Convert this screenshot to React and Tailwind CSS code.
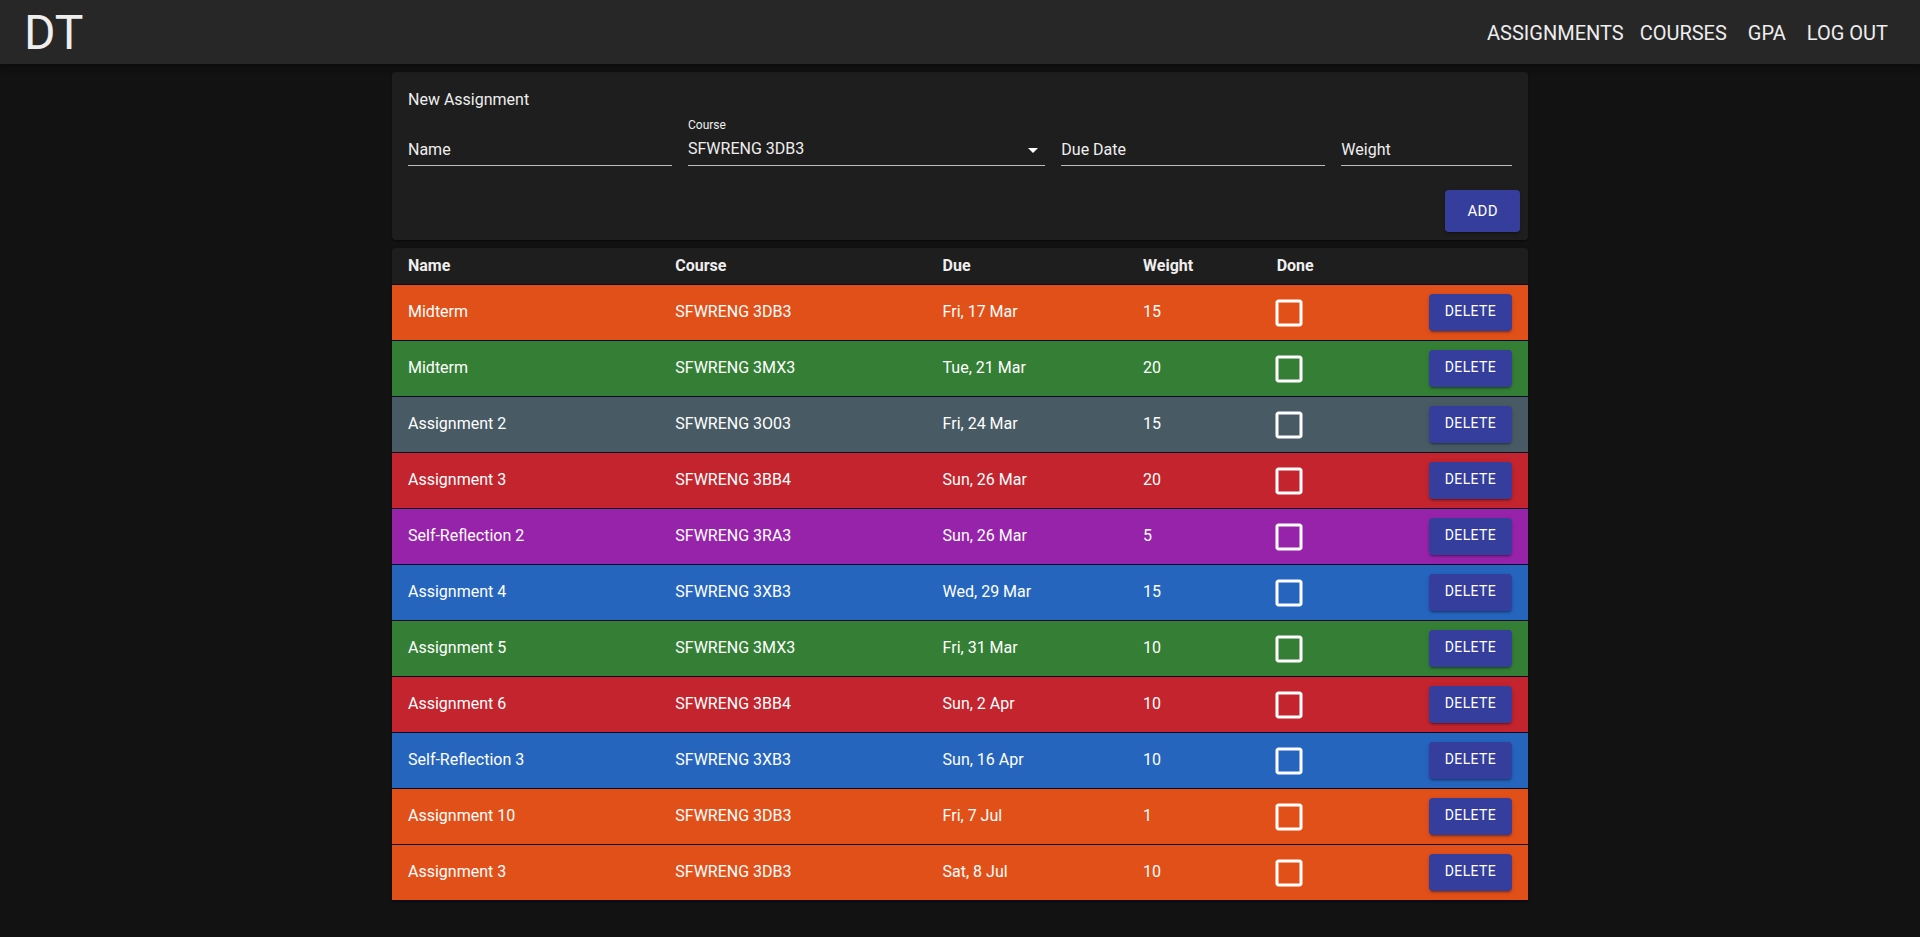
import { useState } from "react";

const COURSE_COLORS = {
  "SFWRENG 3DB3": "bg-[#e25019]",
  "SFWRENG 3MX3": "bg-[#347f35]",
  "SFWRENG 3O03": "bg-[#485b64]",
  "SFWRENG 3BB4": "bg-[#c3242d]",
  "SFWRENG 3RA3": "bg-[#9823ab]",
  "SFWRENG 3XB3": "bg-[#2565be]",
};

const ASSIGNMENTS = [
  ["Midterm", "SFWRENG 3DB3", "Fri, 17 Mar", 15],
  ["Midterm", "SFWRENG 3MX3", "Tue, 21 Mar", 20],
  ["Assignment 2", "SFWRENG 3O03", "Fri, 24 Mar", 15],
  ["Assignment 3", "SFWRENG 3BB4", "Sun, 26 Mar", 20],
  ["Self-Reflection 2", "SFWRENG 3RA3", "Sun, 26 Mar", 5],
  ["Assignment 4", "SFWRENG 3XB3", "Wed, 29 Mar", 15],
  ["Assignment 5", "SFWRENG 3MX3", "Fri, 31 Mar", 10],
  ["Assignment 6", "SFWRENG 3BB4", "Sun, 2 Apr", 10],
  ["Self-Reflection 3", "SFWRENG 3XB3", "Sun, 16 Apr", 10],
  ["Assignment 10", "SFWRENG 3DB3", "Fri, 7 Jul", 1],
  ["Assignment 3", "SFWRENG 3DB3", "Sat, 8 Jul", 10],
].map(([name, course, due, weight], id) => ({ id, name, course, due, weight, done: false }));

const BUTTON_SHADOW =
  "shadow-[0_3px_1px_-2px_rgba(0,0,0,0.2),0_2px_2px_rgba(0,0,0,0.14),0_1px_5px_rgba(0,0,0,0.12)]";
const CARD_SHADOW =
  "shadow-[0_2px_1px_-1px_rgba(0,0,0,0.2),0_1px_1px_rgba(0,0,0,0.14),0_1px_3px_rgba(0,0,0,0.12)]";
const FIELD =
  "peer col-start-1 row-start-1 h-8 w-full border-b border-[#bcbcbc] bg-transparent text-base text-[#eeeeee] outline-none focus:border-white";

function TextField({ id, label, className }) {
  return (
    <div className={`grid content-end items-center ${className}`}>
      <input id={id} type="text" placeholder=" " className={FIELD} />
      <label
        htmlFor={id}
        className="pointer-events-none col-start-1 row-start-1 -translate-y-6 text-xs transition-all peer-placeholder-shown:translate-y-0 peer-placeholder-shown:text-base peer-focus:-translate-y-6 peer-focus:text-xs"
      >
        {label}
      </label>
    </div>
  );
}

function NewAssignment() {
  const courses = Object.keys(COURSE_COLORS);
  return (
    <form
      onSubmit={(e) => e.preventDefault()}
      className={`rounded bg-[#1e1e1e] pt-4 pb-2 ${CARD_SHADOW}`}
    >
      <h2 className="px-4 text-base leading-6">New Assignment</h2>
      <div className="grid grid-cols-12 gap-x-4 px-4 pt-1">
        <TextField id="name" label="Name" className="col-span-3" />
        <div className="col-span-4 flex flex-col">
          <label htmlFor="course" className="text-xs leading-[18px]">Course</label>
          <div className="grid items-center">
            <select id="course" className={`${FIELD} appearance-none pb-0.5`}>
              {courses.map((c) => (
                <option key={c} className="bg-[#1e1e1e]">{c}</option>
              ))}
            </select>
            <svg viewBox="0 0 24 24" aria-hidden="true" className="pointer-events-none col-start-1 row-start-1 size-6 justify-self-end fill-white">
              <path d="M7 10l5 5 5-5z" />
            </svg>
          </div>
        </div>
        <TextField id="due" label="Due Date" className="col-span-3" />
        <TextField id="weight" label="Weight" className="col-span-2" />
      </div>
      <div className="flex justify-end px-2 pt-6">
        <button
          type="submit"
          className={`rounded bg-[#353e9c] px-[22px] py-2 text-[15px] leading-[26px] tracking-wide text-white hover:bg-[#2b3388] ${BUTTON_SHADOW}`}
        >
          ADD
        </button>
      </div>
    </form>
  );
}

function DoneBox({ checked, onChange, label }) {
  return (
    <div className="grid size-9">
      <input
        type="checkbox"
        aria-label={label}
        checked={checked}
        onChange={onChange}
        className="peer col-start-1 row-start-1 size-9 cursor-pointer appearance-none"
      />
      <svg viewBox="0 0 24 24" aria-hidden="true" className="pointer-events-none col-start-1 row-start-1 size-9 fill-white peer-checked:hidden">
        <path d="M19 5v14H5V5h14m0-2H5c-1.1 0-2 .9-2 2v14c0 1.1.9 2 2 2h14c1.1 0 2-.9 2-2V5c0-1.1-.9-2-2-2z" />
      </svg>
      <svg viewBox="0 0 24 24" aria-hidden="true" className="pointer-events-none col-start-1 row-start-1 hidden size-9 fill-white peer-checked:block">
        <path d="M19 3H5c-1.11 0-2 .9-2 2v14c0 1.1.89 2 2 2h14c1.11 0 2-.9 2-2V5c0-1.1-.89-2-2-2zm-9 14l-5-5 1.41-1.41L10 14.17l7.59-7.59L19 8l-9 9z" />
      </svg>
    </div>
  );
}

function AssignmentTable() {
  const [rows, setRows] = useState(ASSIGNMENTS);
  const toggle = (id) => setRows(rows.map((r) => (r.id === id ? { ...r, done: !r.done } : r)));
  return (
    <div className={`overflow-hidden rounded-t bg-[#1e1e1e] ${CARD_SHADOW}`}>
      <table className="w-full table-fixed border-collapse text-left">
        <thead>
          <tr className="h-9 border-b border-[#0a0a23] font-bold">
            <th className="w-4/17 px-4">Name</th>
            <th className="w-4/17 px-4">Course</th>
            <th className="w-3/17 px-4">Due</th>
            <th className="w-2/17 px-4">Weight</th>
            <th className="w-2/17 px-4">Done</th>
            <td className="w-2/17 px-4" />
          </tr>
        </thead>
        <tbody>
          {rows.map((r) => (
            <tr key={r.id} className={`h-14 border-b border-[#0a0a23] text-white ${COURSE_COLORS[r.course]}`}>
              <td className="px-4">{r.name}</td>
              <td className="px-4">{r.course}</td>
              <td className="px-4">{r.due}</td>
              <td className="px-4">{r.weight}</td>
              <td className="px-2.5 pt-px">
                <DoneBox checked={r.done} onChange={() => toggle(r.id)} label={`${r.name} done`} />
              </td>
              <td className="px-4 text-right">
                <button
                  type="button"
                  onClick={() => setRows(rows.filter((x) => x.id !== r.id))}
                  className={`rounded bg-[#353e9c] px-4 pt-[5px] pb-[7px] text-sm leading-[25px] tracking-wide hover:bg-[#2b3388] ${BUTTON_SHADOW}`}
                >
                  DELETE
                </button>
              </td>
            </tr>
          ))}
        </tbody>
      </table>
    </div>
  );
}

export default function App() {
  return (
    <div className="min-h-screen bg-[#121212] font-['Roboto',sans-serif] text-base text-[#eeeeee]">
      <header className="relative flex h-16 items-center justify-between bg-[#272727] px-6 pt-0.5 shadow-[0_2px_4px_-1px_rgba(0,0,0,0.2),0_4px_5px_rgba(0,0,0,0.14),0_1px_10px_rgba(0,0,0,0.12)]">
        <a href="#home" className="text-5xl">DT</a>
        <nav className="flex text-center text-xl">
          <a href="#assignments" className="min-w-16 px-2">ASSIGNMENTS</a>
          <a href="#courses" className="min-w-16 px-2">COURSES</a>
          <a href="#gpa" className="min-w-16 px-2">GPA</a>
          <a href="#logout" className="min-w-16 px-2">LOG OUT</a>
        </nav>
      </header>
      <main className="mx-auto flex max-w-[1152px] flex-col gap-2 p-2">
        <NewAssignment />
        <AssignmentTable />
      </main>
    </div>
  );
}
